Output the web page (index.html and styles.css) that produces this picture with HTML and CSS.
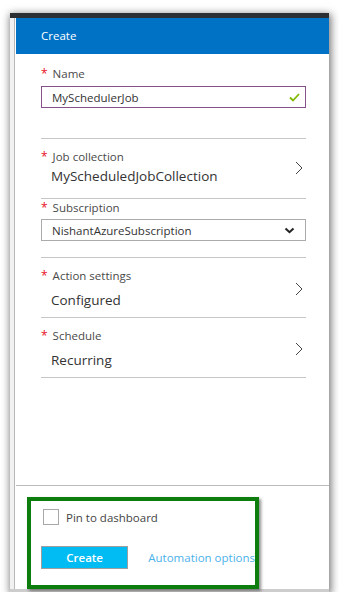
FILE: index.html
```html
<!DOCTYPE html>
<html>
<head>
<meta charset="utf-8">
<link rel="stylesheet" href="styles.css">
</head>
<body>
<div class="frame">
  <div class="topbar"></div>
  <div class="main">
    <div class="strip"></div>
    <div class="blade">
      <div class="header">Create</div>
      <div class="content">
        <div class="section s-name">
          <div class="label"><span class="req">*</span>Name</div>
          <div class="input">
            <span class="input-text">MySchedulerJob</span>
            <svg class="check" width="11" height="9" viewBox="0 0 11 9"><path d="M1 4.5 L4 7.5 L10 1" fill="none" stroke="#7fba00" stroke-width="1.8"/></svg>
          </div>
        </div>
        <div class="section s-job nav">
          <div class="nav-text">
            <div class="label"><span class="req">*</span>Job collection</div>
            <div class="value v-job">MyScheduledJobCollection</div>
          </div>
          <svg class="chev" width="8" height="14" viewBox="0 0 8 14"><path d="M1 1 L7 7 L1 13" fill="none" stroke="#444" stroke-width="1"/></svg>
        </div>
        <div class="section s-sub">
          <div class="label"><span class="req">*</span>Subscription</div>
          <div class="select">
            <span class="input-text">NishantAzureSubscription</span>
            <svg class="down" width="11" height="7" viewBox="0 0 11 7"><path d="M1.5 1.5 L5.5 5.2 L9.5 1.5" fill="none" stroke="#222" stroke-width="2"/></svg>
          </div>
        </div>
        <div class="section s-act nav">
          <div class="nav-text">
            <div class="label"><span class="req">*</span>Action settings</div>
            <div class="value v-gap">Configured</div>
          </div>
          <svg class="chev" width="8" height="14" viewBox="0 0 8 14"><path d="M1 1 L7 7 L1 13" fill="none" stroke="#444" stroke-width="1"/></svg>
        </div>
        <div class="section s-sch nav">
          <div class="nav-text">
            <div class="label"><span class="req">*</span>Schedule</div>
            <div class="value v-gap">Recurring</div>
          </div>
          <svg class="chev" width="8" height="14" viewBox="0 0 8 14"><path d="M1 1 L7 7 L1 13" fill="none" stroke="#444" stroke-width="1"/></svg>
        </div>
      </div>
      <div class="footer">
        <div class="highlight">
          <div class="pin-row">
            <span class="checkbox"></span>
            <span class="pin-text">Pin to dashboard</span>
          </div>
          <div class="action-row">
            <button class="create-btn">Create</button>
            <span class="link">Automation options</span>
          </div>
        </div>
      </div>
    </div>
  </div>
</div>
</body>
</html>
```
FILE: styles.css
```css
html, body {
  margin: 0;
  padding: 0;
  background: #ffffff;
}
body {
  font-family: "Open Sans", "Noto Sans", sans-serif;
  color: #444;
}
.frame {
  margin: 13px 0 0 10px;
  width: 319px;
  display: flex;
  flex-direction: column;
  background: #fff;
  border-bottom: 3px solid #cdcdcd;
  box-shadow: 1px 2px 8px 1px rgba(0, 0, 0, 0.55);
}
.topbar {
  height: 5px;
  background: #2b2e33;
}
.main {
  display: flex;
  height: 571px;
}
.strip {
  width: 4px;
  background: #f1f1f1;
  border-right: 1px solid #b8b8b8;
  margin-right: 1px;
}
.blade {
  flex: 1;
  display: flex;
  flex-direction: column;
}
.header {
  height: 36px;
  background: #0072c6;
  color: #fff;
  font-size: 11.5px;
  line-height: 36px;
  padding-left: 25px;
}
.content {
  flex: 1;
  padding: 0 23px 0 25px;
}
.section {
  border-bottom: 1px solid #c6c6c6;
}
.nav {
  display: flex;
  align-items: center;
}
.nav-text {
  flex: 1;
}
.chev {
  margin-right: 3px;
}
.label {
  font-size: 11.5px;
  line-height: 16px;
  color: #4a4a4a;
  white-space: nowrap;
}
.req {
  color: #e81123;
  margin-right: 5px;
  font-size: 12px;
}
.value {
  font-size: 13.5px;
  line-height: 20px;
  color: #333;
  padding-left: 10px;
}
.s-name {
  padding: 12px 0 30px;
}
.input, .select {
  height: 22px;
  box-sizing: border-box;
  display: flex;
  align-items: center;
  justify-content: space-between;
  padding: 0 5px 0 10px;
}
.input {
  margin-top: 4px;
  border: 1px solid #86508c;
}
.input-text {
  font-size: 11.5px;
  color: #333;
}
.s-job {
  padding: 10px 0 12px;
}
.v-job {
  margin-top: 1px;
}
.s-sub {
  padding: 1px 0 16px;
}
.select {
  margin-top: 3px;
  border: 1px solid #ababab;
  padding-right: 10px;
}
.s-act, .s-sch {
  padding: 10px 0 7px;
}
.v-gap {
  margin-top: 6px;
}
.footer {
  height: 104px;
  box-sizing: border-box;
  border-top: 1px solid #bdbdbd;
  padding: 11px 0 0 11px;
}
.highlight {
  width: 232px;
  height: 92px;
  box-sizing: border-box;
  border: 4px solid #0d7d0d;
  box-shadow: 2px 2px 3px rgba(0, 0, 0, 0.45);
  overflow: hidden;
  padding: 8px 0 0 10px;
  white-space: nowrap;
}
.pin-row {
  display: flex;
  align-items: center;
  height: 16px;
  padding-left: 2px;
}
.checkbox {
  width: 16px;
  height: 16px;
  box-sizing: border-box;
  border: 1px solid #a8a8a8;
  margin-right: 7px;
}
.pin-text {
  font-size: 11.5px;
  color: #444;
}
.action-row {
  margin-top: 21px;
  display: flex;
  align-items: center;
}
.create-btn {
  width: 89px;
  height: 23px;
  box-sizing: border-box;
  background: #00bcf2;
  border: 1px solid #9e9e9e;
  color: #fff;
  font-family: "Open Sans", sans-serif;
  font-weight: 600;
  font-size: 11.5px;
  padding: 0;
}
.link {
  margin-left: 20px;
  font-size: 11.5px;
  color: #4cb2ea;
}
```
